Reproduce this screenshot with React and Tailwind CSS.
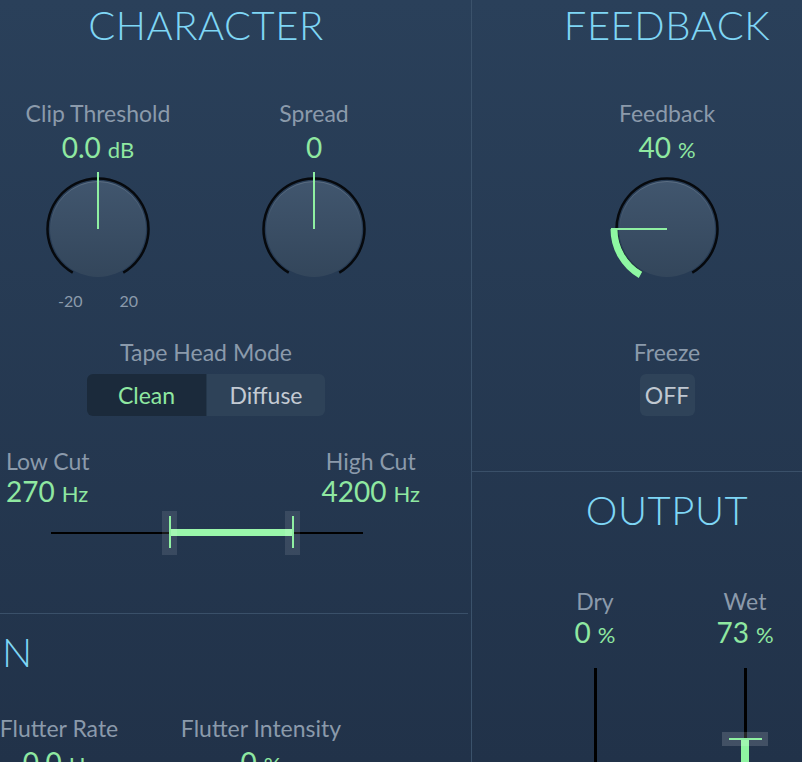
import React from 'react';

const Knob = ({ pointer = 'up', arc = false }) => {
  const id = arc ? 'kf' : pointer === 'up' ? 'ku' : 'kl';
  return (
    <svg width="130" height="118" viewBox="0 0 130 118" className="block">
      <defs>
        <linearGradient id={`${id}-body`} x1="0" y1="0" x2="0" y2="1">
          <stop offset="0" stopColor="#41566e" />
          <stop offset="1" stopColor="#33465b" />
        </linearGradient>
        <linearGradient id={`${id}-rim`} x1="0" y1="0" x2="0" y2="1">
          <stop offset="0" stopColor="#ffffff" stopOpacity="0.14" />
          <stop offset="0.5" stopColor="#ffffff" stopOpacity="0" />
        </linearGradient>
      </defs>
      <circle cx="65" cy="65" r="48" fill={`url(#${id}-body)`} />
      <circle cx="65" cy="65" r="47.5" fill="none" stroke={`url(#${id}-rim)`} strokeWidth="1" />
      <path d="M 39.75 108.7 A 50.5 50.5 0 1 1 90.25 108.7" fill="none" stroke="#06090d" strokeWidth="2.5" />
      {arc && (
        <path d="M 38.5 110.9 A 53 53 0 0 1 12 65" fill="none" stroke="#8ef7a2" strokeWidth="7" />
      )}
      {pointer === 'up' ? (
        <line x1="65" y1="8" x2="65" y2="65" stroke="#8ff0a2" strokeWidth="2" />
      ) : (
        <line x1="9" y1="65" x2="65" y2="65" stroke="#8ff0a2" strokeWidth="2" />
      )}
    </svg>
  );
};

const Label = ({ children }) => (
  <div className="text-[23px] leading-none text-[#8b9aab] whitespace-nowrap">{children}</div>
);

const Value = ({ num, unit }) => (
  <div className="flex items-baseline justify-center leading-none text-[#8fe8a1] whitespace-nowrap">
    <span className="text-[28px]">{num}</span>
    {unit && <span className="text-[22px] ml-[7px]">{unit}</span>}
  </div>
);

const Header = ({ children }) => (
  <div className="text-[40px] leading-none font-light text-[#7fd6f5] tracking-[0.5px] whitespace-nowrap">{children}</div>
);

export default function App() {
  return (
    <div className="flex h-[762px] w-full overflow-hidden bg-linear-to-b from-[#2a405a] to-[#213249] font-[Lato,sans-serif]">
      {/* left column */}
      <div className="w-[472px] shrink-0 flex flex-col border-r border-[#3b526b]">
        <div className="h-[614px] shrink-0 border-b border-[#3a5069] mr-[3px]">
          <div className="w-[412px] flex flex-col items-center">
            <div className="mt-[5px]">
              <Header>CHARACTER</Header>
            </div>

            <div className="mt-[57px] flex gap-[20px]">
              <div className="w-[196px] flex flex-col items-center">
                <Label>Clip Threshold</Label>
                <div className="mt-[8px]">
                  <Value num="0.0" unit="dB" />
                </div>
                <div className="mt-[3px]">
                  <Knob pointer="up" />
                </div>
                <div className="mt-[11px] flex gap-[37px] text-[16px] leading-none text-[#8b9aab]">
                  <span>-20</span>
                  <span>20</span>
                </div>
              </div>
              <div className="w-[196px] flex flex-col items-center">
                <Label>Spread</Label>
                <div className="mt-[8px]">
                  <Value num="0" />
                </div>
                <div className="mt-[3px]">
                  <Knob pointer="up" />
                </div>
              </div>
            </div>

            <div className="mt-[32px]">
              <Label>Tape Head Mode</Label>
            </div>
            <div className="mt-[10px] flex h-[42px] w-[238px] rounded-[6px] overflow-hidden text-[23px] leading-none">
              <div className="w-[119px] flex items-center justify-center bg-[#1b2a3b] text-[#8fe8a1]">Clean</div>
              <div className="flex-1 flex items-center justify-center bg-[#2e4258] text-[#c3cad3] border-l border-[#24374b]">Diffuse</div>
            </div>
          </div>

          <div className="mt-[34px] w-[426px] px-[6px] flex justify-between">
            <div className="flex flex-col items-start">
              <Label>Low Cut</Label>
              <div className="mt-[4px]">
                <Value num="270" unit="Hz" />
              </div>
            </div>
            <div className="flex flex-col items-center">
              <Label>High Cut</Label>
              <div className="mt-[4px]">
                <Value num="4200" unit="Hz" />
              </div>
            </div>
          </div>

          <div className="mt-[6px] ml-[51px] w-[312px] h-[44px] relative">
            <div className="absolute left-0 right-0 top-[21px] h-[2px] bg-black" />
            <div className="absolute left-[119px] w-[123px] top-[18px] h-[7px] bg-[#9af7ab]" />
            <div className="absolute left-[111px] top-0 w-[15px] h-[44px] bg-white/10 flex justify-center">
              <div className="mt-[5px] w-[2px] h-[32px] bg-[#8ff0a2]" />
            </div>
            <div className="absolute left-[234px] top-0 w-[15px] h-[44px] bg-white/10 flex justify-center">
              <div className="mt-[5px] w-[2px] h-[32px] bg-[#8ff0a2]" />
            </div>
          </div>
        </div>

        <div className="flex-1 flex flex-col">
          <div className="mt-[18px] pl-[2px]">
            <Header>N</Header>
          </div>
          <div className="mt-[45px] flex gap-[62px]">
            <div className="w-[118px] flex flex-col items-center">
              <Label>Flutter Rate</Label>
              <div className="mt-[8px]">
                <Value num="0.0" unit="Hz" />
              </div>
            </div>
            <div className="w-[162px] flex flex-col items-center">
              <Label>Flutter Intensity</Label>
              <div className="mt-[8px]">
                <Value num="0" unit="%" />
              </div>
            </div>
          </div>
        </div>
      </div>

      {/* right column */}
      <div className="flex-1 flex flex-col">
        <div className="h-[472px] shrink-0 border-b border-[#3a5069] pl-[60px] flex flex-col">
          <div className="flex flex-col items-center">
            <div className="mt-[5px]">
              <Header>FEEDBACK</Header>
            </div>
            <div className="mt-[57px]">
              <Label>Feedback</Label>
            </div>
            <div className="mt-[8px]">
              <Value num="40" unit="%" />
            </div>
            <div className="mt-[3px]">
              <Knob pointer="left" arc />
            </div>
            <div className="mt-[59px]">
              <Label>Freeze</Label>
            </div>
            <div className="mt-[10px] w-[55px] h-[42px] rounded-[6px] bg-[#2f4359] flex items-center justify-center text-[23px] leading-none text-[#c0c8d1]">
              OFF
            </div>
          </div>
        </div>

        <div className="flex-1 pl-[60px] flex flex-col">
          <div className="mt-[18px] flex justify-center">
            <Header>OUTPUT</Header>
          </div>
          <div className="mt-[60px] ml-[13px] flex gap-[50px]">
            <div className="w-[100px] flex flex-col items-center">
              <Label>Dry</Label>
              <div className="mt-[5px]">
                <Value num="0" unit="%" />
              </div>
              <div className="mt-[22px] w-[3px] h-[100px] bg-black" />
            </div>
            <div className="w-[100px] flex flex-col items-center">
              <Label>Wet</Label>
              <div className="mt-[5px]">
                <Value num="73" unit="%" />
              </div>
              <div className="mt-[22px] relative w-[46px] h-[100px] flex justify-center">
                <div className="w-[3px] h-full bg-black" />
                <div className="absolute left-[19px] top-[72px] w-[8px] h-[28px] bg-[#8ff5a2]" />
                <div className="absolute left-0 top-[64px] w-[46px] h-[14px] bg-white/15 flex items-center justify-center">
                  <div className="w-[33px] h-[2px] bg-[#8ff0a2]" />
                </div>
              </div>
            </div>
          </div>
        </div>
      </div>
    </div>
  );
}
